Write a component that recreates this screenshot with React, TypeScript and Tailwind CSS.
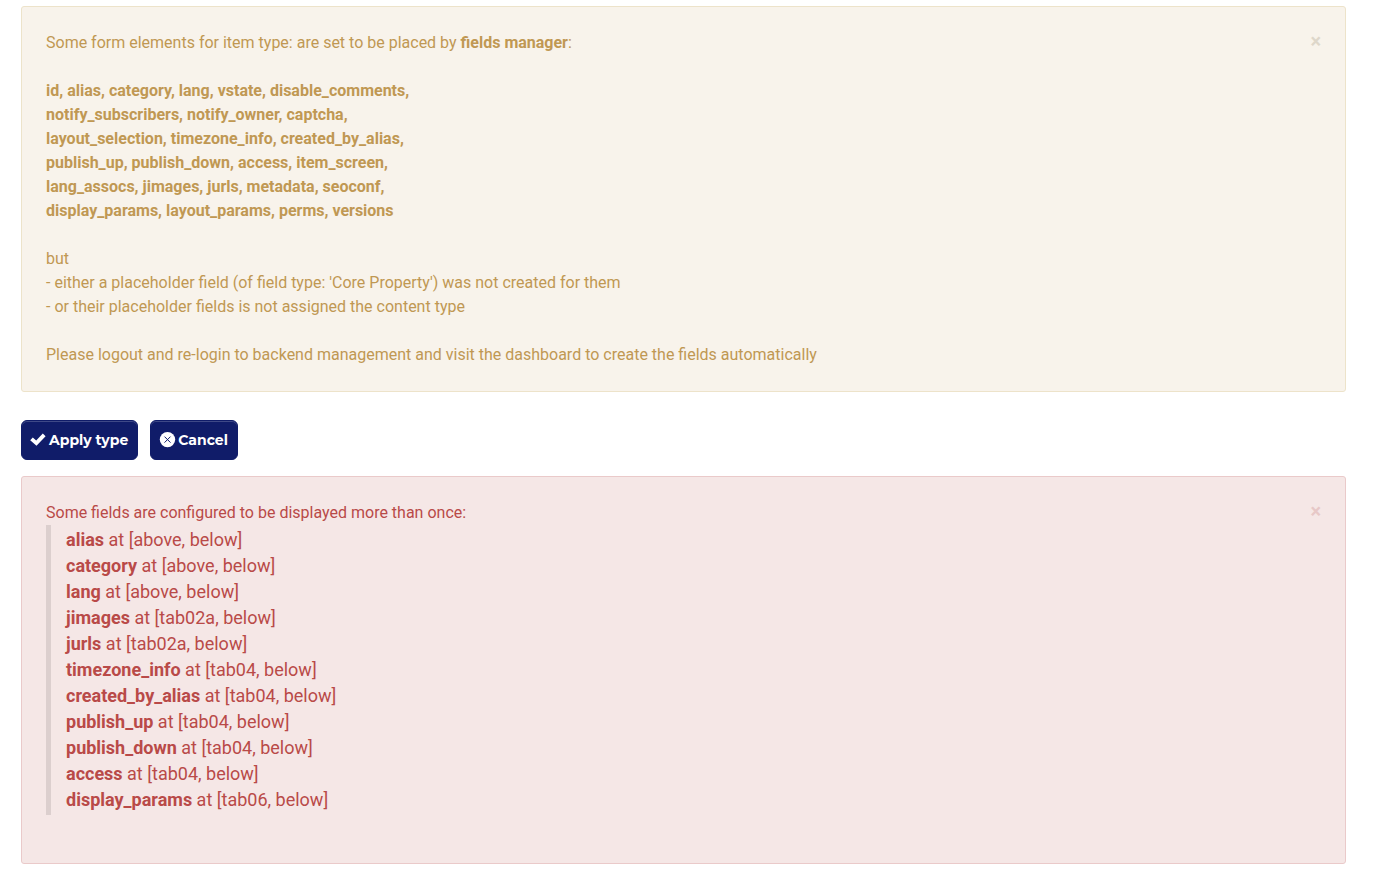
const missingFields = [
    'id, alias, category, lang, vstate, disable_comments,',
    'notify_subscribers, notify_owner, captcha,',
    'layout_selection, timezone_info, created_by_alias,',
    'publish_up, publish_down, access, item_screen,',
    'lang_assocs, jimages, jurls, metadata, seoconf,',
    'display_params, layout_params, perms, versions',
];

const duplicates = [
    { name: 'alias', places: 'above, below' },
    { name: 'category', places: 'above, below' },
    { name: 'lang', places: 'above, below' },
    { name: 'jimages', places: 'tab02a, below' },
    { name: 'jurls', places: 'tab02a, below' },
    { name: 'timezone_info', places: 'tab04, below' },
    { name: 'created_by_alias', places: 'tab04, below' },
    { name: 'publish_up', places: 'tab04, below' },
    { name: 'publish_down', places: 'tab04, below' },
    { name: 'access', places: 'tab04, below' },
    { name: 'display_params', places: 'tab06, below' },
];

const buttonClass =
    'flex h-10 items-center gap-[3px] rounded-[6px] border border-[#101c69] bg-[#101c69] px-[9px] shadow-[inset_0_1px_0_rgba(255,255,255,0.2)]';

function CloseButton({ className }: { className: string }) {
    return (
        <button type="button" aria-label="Close" className={`shrink-0 text-xl font-bold leading-5 ${className}`}>
            ×
        </button>
    );
}

function CheckIcon() {
    return (
        <svg viewBox="0 0 15 15" className="size-[15px] overflow-visible" aria-hidden="true">
            <path d="M-0.8 7.2L1.8 4.5L5.2 7.4L11.8 0.6L14.6 3.3L5.5 12.8Z" fill="currentColor" />
        </svg>
    );
}

function CancelIcon() {
    return (
        <svg viewBox="0 0 15 15" className="size-[15px] overflow-visible" aria-hidden="true">
            <circle cx="7.5" cy="6.6" r="7.7" fill="currentColor" />
            <path d="M4.5 3.6l6 6M10.5 3.6l-6 6" stroke="#101c69" strokeWidth="1" />
        </svg>
    );
}

export default function App() {
    return (
        <main className="pt-1.5 pr-[49px] pb-2 pl-[21px] font-[Roboto,sans-serif] text-base leading-6">
            <section className="flex items-start justify-between rounded-[3px] border border-[#ede3ca] bg-[#f8f3eb] p-6 text-[#c09853]">
                <div>
                    <p>
                        Some form elements for item type: are set to be placed by <b>fields manager</b>:
                    </p>
                    <p className="mt-6 font-bold">
                        {missingFields.map((line) => (
                            <span key={line} className="block">{line}</span>
                        ))}
                    </p>
                    <p className="mt-6">but</p>
                    <p>- either a placeholder field (of field type: 'Core Property') was not created for them</p>
                    <p>- or their placeholder fields is not assigned the content type</p>
                    <p className="mt-6">
                        Please logout and re-login to backend management and visit the dashboard to create the fields automatically
                    </p>
                </div>
                <CloseButton className="text-[#ded7ca]" />
            </section>

            <div className="mt-7 mb-4 flex gap-3 font-[Montserrat,sans-serif] text-sm font-bold text-white">
                <button type="button" className={buttonClass}>
                    <CheckIcon />
                    Apply type
                </button>
                <button type="button" className={buttonClass}>
                    <CancelIcon />
                    Cancel
                </button>
            </div>

            <section className="flex items-start justify-between rounded-[3px] border border-[#eacaca] bg-[#f5e7e6] px-6 pt-6 pb-12 text-[#b94a48]">
                <div>
                    <p>Some fields are configured to be displayed more than once:</p>
                    <blockquote className="border-l-[5px] border-black/10 py-0.5 pl-[15px] text-lg leading-[26px]">
                        {duplicates.map(({ name, places }) => (
                            <p key={name}>
                                <b>{name}</b> at [{places}]
                            </p>
                        ))}
                    </blockquote>
                </div>
                <CloseButton className="text-[#e7c8c7]" />
            </section>
        </main>
    );
}
